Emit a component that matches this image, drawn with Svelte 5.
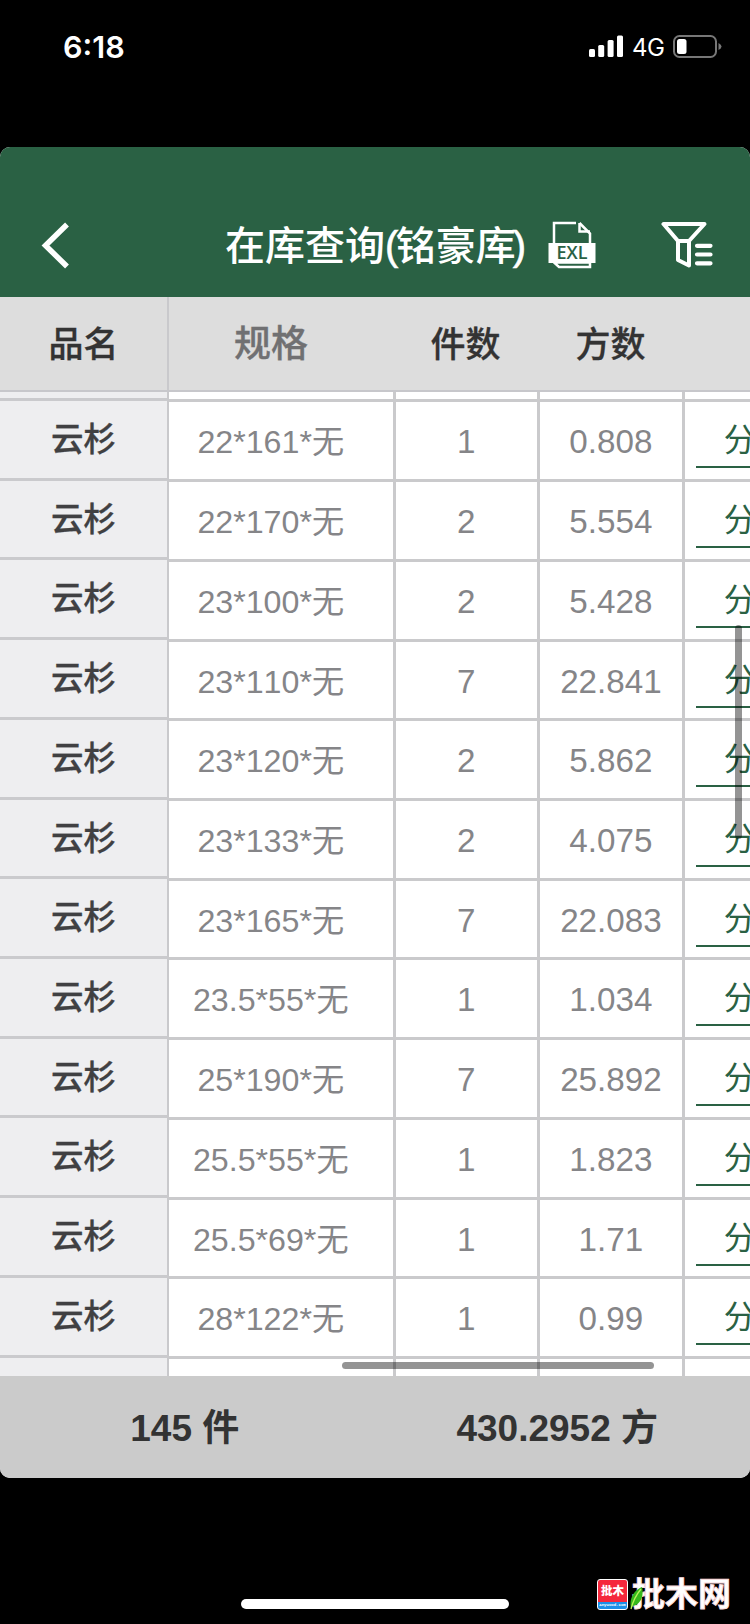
<script lang="ts">
	type Row = { name: string; spec: string; count: string; volume: string };

	const stock = [
		['22*161*无', '1', '0.808'],
		['22*170*无', '2', '5.554'],
		['23*100*无', '2', '5.428'],
		['23*110*无', '7', '22.841'],
		['23*120*无', '2', '5.862'],
		['23*133*无', '2', '4.075'],
		['23*165*无', '7', '22.083'],
		['23.5*55*无', '1', '1.034'],
		['25*190*无', '7', '25.892'],
		['25.5*55*无', '1', '1.823'],
		['25.5*69*无', '1', '1.71'],
		['28*122*无', '1', '0.99']
	];

	let rows: Row[] = $state(
		stock.map(([spec, count, volume]) => ({ name: '云杉', spec, count, volume }))
	);
</script>

<div class="screen">
	<div class="status">
		<span class="time">6:18</span>
		<div class="signals">
			<svg width="35" height="23" viewBox="0 0 35 23" fill="#fff">
				<rect x="0" y="14" width="6" height="8" rx="1.5" />
				<rect x="9.2" y="10" width="6" height="12" rx="1.5" />
				<rect x="18.6" y="5" width="6" height="17" rx="1.5" />
				<rect x="28" y="0.5" width="6" height="21.5" rx="1.5" />
			</svg>
			<span class="network">4G</span>
			<svg width="50" height="24" viewBox="0 0 50 24">
				<rect x="1" y="1" width="42" height="21" rx="5.5" fill="none" stroke="#777" stroke-width="2" />
				<rect x="4" y="4" width="9.5" height="15" rx="2.5" fill="#fff" />
				<path d="M45.5 8 Q48.5 9.5 48.5 11.5 Q48.5 13.5 45.5 15 Z" fill="#777" />
			</svg>
		</div>
	</div>

	<div class="app">
		<header>
			<svg class="back" width="30" height="48" viewBox="0 0 30 48">
				<path d="M27 3.5 L5.5 24.5 L27 45.5" fill="none" stroke="#fff" stroke-width="5.5" />
			</svg>
			<h1>在库查询<i>(</i>铭豪库<i class="close">)</i></h1>
			<svg class="export" width="48" height="48" viewBox="0 0 48 48">
				<path d="M28 2 H6 V22 M31.5 2 L42 12.5 V46 H11 L6 41.5 V40 M6 41.5 H42" fill="none" stroke="#fff" stroke-width="2.5" />
				<path d="M31.5 2 V10.5 H42" fill="none" stroke="#fff" stroke-width="2.5" />
				<rect x="0.5" y="22" width="47" height="20" fill="#fff" />
				<text x="24" y="38" text-anchor="middle" textLength="31" lengthAdjust="spacingAndGlyphs">EXL</text>
			</svg>
			<svg class="filter" width="52" height="48" viewBox="0 0 52 48" fill="none" stroke="#fff" stroke-linecap="round" stroke-linejoin="round">
				<path d="M2.5 4 H43.5 L28 21 V45.5 L17 40 V21 Z M17 21 H28" stroke-width="4" />
				<path d="M36 25.8 H49.5 M36 34.5 H49.5 M36 43.3 H49.5" stroke-width="4.2" />
			</svg>
		</header>

		<div class="thead">
			<span class="th name">品名</span>
			<span class="th spec">规格</span>
			<span class="th num">件数</span>
			<span class="th num">方数</span>
		</div>

		<div class="tbody">
			<div class="fixed">
				<div class="stub"></div>
				{#each rows as row}
					<div class="row">{row.name}</div>
				{/each}
			</div>
			<div class="scroll">
				<div class="row stub">
					<span class="cell spec"></span>
					<span class="cell num"></span>
					<span class="cell num"></span>
				</div>
				{#each rows as row}
					<div class="row">
						<span class="cell spec">{row.spec}</span>
						<span class="cell num">{row.count}</span>
						<span class="cell num">{row.volume}</span>
						<span class="link">分</span>
					</div>
				{/each}
				<div class="row last">
					<span class="cell spec"></span>
					<span class="cell num"></span>
					<span class="cell num"></span>
				</div>
			</div>
			<i class="bar vertical"></i>
			<i class="bar horizontal"></i>
		</div>

		<footer>
			<span class="pieces">145 件</span>
			<span class="cubic">430.2952 方</span>
		</footer>
	</div>

	<div class="home"></div>

	<div class="mark">
		<div class="badge">
			<b>批木</b>
			<small>Anywood.com</small>
		</div>
		<span class="brand">批木网</span>
		<svg class="leaf" width="14" height="24" viewBox="0 0 14 24">
			<path d="M1 23 C-1 13 3 5 12 1 C14 10 11 18 3 20 Z" fill="#35b81c" />
			<path d="M1 23 C3 15 6 9 11 3" fill="none" stroke="#b8f05a" stroke-width="1.3" />
		</svg>
	</div>
</div>

<style>
	:global(body) {
		margin: 0;
		background: #000;
	}
	.screen {
		position: relative;
		width: 750px;
		height: 1624px;
		overflow: hidden;
		background: #000;
		font-family: 'Liberation Sans', 'Noto Sans CJK SC', sans-serif;
	}
	svg {
		display: block;
		flex: none;
	}
	.status {
		display: flex;
		justify-content: space-between;
		box-sizing: border-box;
		height: 147px;
		padding: 28px 27px 0 63px;
		color: #fff;
		font-family: Inter, sans-serif;
	}
	.time {
		font-size: 30.5px;
		line-height: 37px;
		font-weight: 600;
	}
	.signals {
		display: flex;
		align-items: center;
		height: 37px;
	}
	.network {
		width: 34px;
		margin: 2px 7px 0 8px;
		font-size: 24px;
		line-height: 30px;
		letter-spacing: -0.6px;
		white-space: nowrap;
	}
	.app {
		display: flex;
		flex-direction: column;
		height: 1331px;
		border-radius: 10px;
		overflow: hidden;
		background: #fff;
	}
	header {
		display: flex;
		flex: none;
		box-sizing: border-box;
		height: 150px;
		padding: 74px 0 0 40px;
		background: #2a6144;
	}
	h1 {
		width: 302px;
		margin: -3px 0 0 155px;
		color: #fff;
		font-size: 40px;
		line-height: 56px;
		font-weight: 500;
		white-space: nowrap;
	}
	h1 i {
		font-style: normal;
		letter-spacing: -2.5px;
		-webkit-text-stroke: 0.6px #fff;
	}
	h1 .close {
		margin-left: -3px;
	}
	.export {
		margin-left: 21px;
	}
	.export text {
		fill: #2a6144;
		font: 600 18px 'Open Sans', sans-serif;
	}
	.filter {
		margin-left: 65px;
		margin-top: -1px;
	}
	.thead {
		display: flex;
		flex: none;
		box-sizing: border-box;
		height: 95px;
		border-bottom: 2px solid #c7c7cb;
		background: #ddd;
		color: #333;
		line-height: 95px;
		text-align: center;
	}
	.th {
		box-sizing: border-box;
		height: 93px;
		font-size: 35px;
		font-weight: 500;
		-webkit-text-stroke: 0.3px currentColor;
	}
	.th.name {
		width: 169px;
		border-right: 2px solid #c9c9cc;
	}
	.th.spec {
		width: 225px;
		padding-right: 21px;
		color: #707072;
		font-size: 37px;
	}
	.th.num {
		width: 145px;
		padding-right: 2px;
	}
	.tbody {
		position: relative;
		display: flex;
		flex: none;
		height: 984px;
		overflow: hidden;
	}
	.fixed {
		box-sizing: border-box;
		width: 169px;
		border-right: 2px solid #c9c9cc;
		background: #eeeef0;
	}
	.fixed .stub {
		box-sizing: border-box;
		height: 9px;
		border-bottom: 3px solid #cacacd;
	}
	.fixed .row {
		box-sizing: border-box;
		height: 79.72px;
		border-bottom: 3px solid #cacacd;
		color: #404042;
		font-size: 32.5px;
		line-height: 79px;
		font-weight: 500;
		text-align: center;
		-webkit-text-stroke: 0.3px #404042;
	}
	.scroll {
		flex: 1;
		min-width: 0;
		overflow: hidden;
	}
	.scroll .row {
		display: flex;
		box-sizing: border-box;
		height: 79.72px;
		border-bottom: 3px solid #cacacc;
	}
	.scroll .row.stub {
		height: 10.4px;
	}
	.scroll .last {
		border-bottom: none;
	}
	.cell {
		flex: none;
		box-sizing: border-box;
		border-right: 3px solid #cacacc;
		color: #858588;
		font-size: 33.2px;
		line-height: 79px;
		text-align: center;
	}
	.cell.spec {
		width: 226.5px;
		padding-right: 20px;
		font-size: 32.2px;
		font-kerning: none;
		line-height: 80.5px;
	}
	.cell.num {
		width: 144.6px;
	}
	.link {
		flex: none;
		box-sizing: border-box;
		width: 120px;
		height: 66px;
		margin-left: 11px;
		padding-left: 28px;
		border-bottom: 2.5px solid #2a6144;
		color: #2a6144;
		font-size: 32px;
		line-height: 76px;
	}
	.bar {
		position: absolute;
		border-radius: 4px;
		background: rgba(0, 0, 0, 0.42);
	}
	.vertical {
		top: 233px;
		right: 8px;
		width: 7px;
		height: 214px;
	}
	.horizontal {
		left: 342px;
		bottom: 7px;
		width: 312px;
		height: 7px;
	}
	footer {
		display: flex;
		flex: 1;
		padding-top: 2px;
		background: #cbcbcb;
		color: #333;
		font-size: 37px;
		line-height: 102px;
		font-weight: 700;
	}
	.pieces,
	.cubic {
		flex: 1;
		text-align: center;
	}
	.pieces {
		padding-right: 3px;
	}
	.cubic {
		padding-right: 8px;
	}
	.home {
		position: absolute;
		left: 241px;
		bottom: 15px;
		width: 268px;
		height: 10px;
		border-radius: 5px;
		background: #fff;
	}
	.mark {
		position: absolute;
		left: 597px;
		top: 1579px;
		display: flex;
	}
	.badge {
		box-sizing: border-box;
		width: 31px;
		height: 31px;
		border: 1px solid #fff;
		border-radius: 3px;
		overflow: hidden;
		background: linear-gradient(#f5283c 22px, #1a8fe8 22px);
		color: #fff;
		text-align: center;
	}
	.badge b {
		display: block;
		font-size: 11.5px;
		line-height: 22px;
		font-weight: 900;
	}
	.badge small {
		display: block;
		margin: 0 -6px;
		font: 700 4px/7px 'Liberation Mono', monospace;
	}
	.brand {
		margin-left: 4px;
		color: #fff;
		font-size: 33px;
		line-height: 31px;
		font-weight: 700;
		-webkit-text-stroke: 0.9px #fbdcde;
		white-space: nowrap;
	}
	.leaf {
		position: absolute;
		left: 33px;
		top: 7px;
	}
</style>
